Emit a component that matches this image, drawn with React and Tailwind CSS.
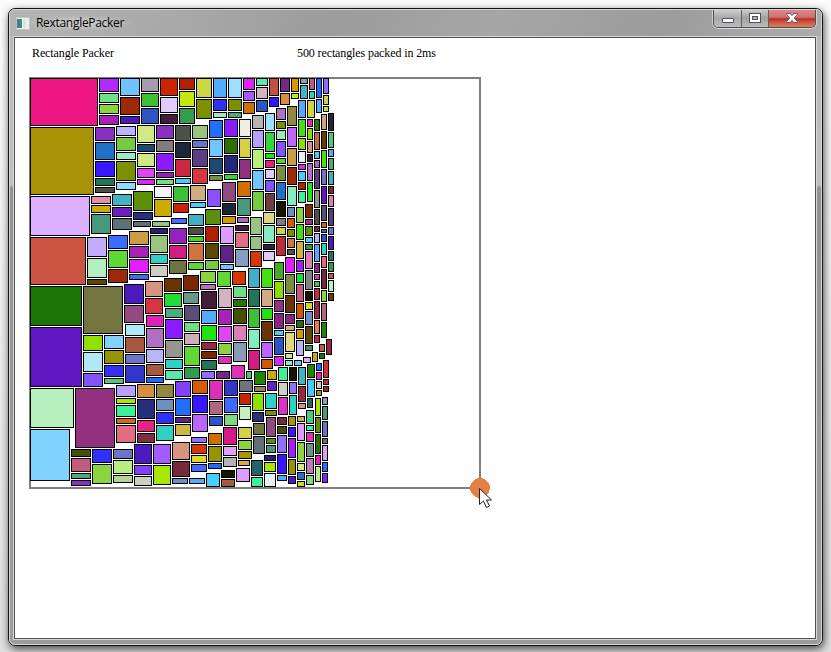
import React from "react";

// Packed boxes grouped in columns: [x, width, "y height colour, ..."]
const COLUMNS = [
  [30, 68, "78 48 ee1680"],
  [30, 64, "127 68 a89206"],
  [30, 60, "196 40 dcb0ff"],
  [30, 56, "237 48 cc5442"],
  [30, 52, "286 40 1c7404,327 60 6016c0"],
  [30, 44, "388 40 b8f0c0"],
  [30, 40, "429 52 80d2ff"],
  [83, 40, "286 48 747440"],
  [75, 40, "388 60 923280"],
  [99, 20, "78 14 b22aff,93 10 6ee087,104 10 8cd440,115 10 a822b8"],
  [120, 20, "78 18 6ec3ff,97 18 9c2a06,116 8 4c18c0"],
  [141, 18, "78 14 a59cb0,93 14 3cc034,108 16 2c56c4"],
  [160, 18, "78 18 cc2400,97 16 e0ccfa,114 10 421c38"],
  [179, 16, "78 12 b41f00,91 16 c6e80c,108 16 309c4c"],
  [196, 16, "78 20 ccd644,99 20 7c9000"],
  [213, 14, "78 20 54aaff,99 12 3030f8,112 6 a0e6c0"],
  [228, 14, "78 20 9ee0ff,99 12 7c9000,112 6 48ac7c"],
  [243, 12, "78 12 e022fa,91 10 a45cff,102 12 d07000"],
  [256, 12, "78 8 5ceca8,87 12 d4b4c0,100 12 2c56c4"],
  [269, 10, "78 18 c45242,97 10 3818f8"],
  [280, 10, "78 14 742a84,93 12 d88e40"],
  [291, 8, "78 14 d89800,93 6 c6e80c"],
  [300, 8, "78 6 889cb8,85 14 40b4c4"],
  [309, 6, "78 12 c45a80,91 8 2cd4c0"],
  [316, 6, "78 20 1c6cff,99 14 54aaff"],
  [323, 6, "78 16 8a70ff,95 10 ccd644,106 6 c6e80c"],
  [95, 20, "127 14 8830c0,142 18 2270c8,161 16 3818ff,178 8 247458,187 6 4c5048"],
  [116, 20, "126 10 bab4f8,137 14 76cc40,152 8 a0e6c0,161 20 7c9000,182 8 8cdcff"],
  [137, 18, "125 18 d0ea84,144 8 204874,153 14 d0ea84,168 10 e044fa,179 6 e022fa"],
  [156, 18, "125 14 8830c0,140 12 847c80,153 18 8a1cff,172 6 9a20b8,179 6 6ee087"],
  [175, 16, "125 16 4c5048,142 16 1c2838,159 18 cc2844,178 6 40d0ff"],
  [192, 16, "125 14 98c480,140 8 6a74c8,149 18 5c3c84,168 16 d83442"],
  [209, 14, "120 18 226eff,139 18 70c6ff,158 16 204874,175 6 749040"],
  [224, 14, "119 18 8a1cff,138 16 2c7004,155 18 242878,174 6 30d83c"],
  [239, 12, "119 18 eeeee4,138 20 d6d044,159 20 923280"],
  [252, 12, "115 14 b4b4b8,130 18 b8a0ff,149 20 b8ee80,170 20 70c6ff,191 20 76cc40"],
  [265, 10, "113 18 9ee0ff,132 20 30d83c,153 6 20e420,160 8 ee1a80,169 10 e0ccfa,180 12 8054ff,193 18 6e3e44"],
  [276, 10, "108 12 b070c4,121 8 7c9000,130 10 a0e6c0,141 16 8054ff,158 6 5ed42c,165 16 7c8c40,182 18 2470c8,201 16 161600,218 8 847c80,227 8 ccd644,236 20 bc2c40"],
  [287, 10, "106 20 948840,127 20 c064ff,148 18 cc9c44,167 18 9c2a06,186 20 84ecc0"],
  [287, 8, "207 10 6e90c0,218 10 d85c00,229 8 7c9000,238 10 d07444,249 6 545454"],
  [298, 8, "100 18 54aaff,119 18 44e010,138 12 8ce000,151 12 e4f0f8,164 6 e022fa,171 10 40d0ff,182 8 b41f00,191 12 3cf09c"],
  [296, 8, "207 16 8cd440,224 16 44e010,241 18 d0b440,260 12 a81cff,273 10 20dc34,284 18 c45a80,303 16 d05800,320 8 2c7004,329 10 d89800,340 16 b8b4f8"],
  [307, 8, "100 18 d0d838"],
  [307, 6, "119 8 dc30b8,128 12 8ce000,141 12 d8947e,154 8 421c38,163 18 b070c4,182 20 20e420"],
  [305, 8, "204 14 7c2a06,219 6 98308a,226 10 5c9008,237 6 44d0ff,244 6 30984c,251 18 dc80b8,270 20 808484,291 10 161600,302 8 d0d838,311 14 6e90c0,326 18 5c4804,345 6 30984c"],
  [314, 6, "119 12 247c04,132 18 c46a48,151 8 44ccff,160 8 a868b8,169 20 5c3c84,190 18 909090,209 16 4c5048,226 6 742a38,233 10 b8b4f8,244 18 54aaff,263 10 8c2484,274 6 e030d0,281 6 20dc34,288 12 cc2844,301 18 9c2840,320 14 e87c44,335 8 cc2440"],
  [321, 6, "114 16 cca880,131 18 6e3c06,150 18 44e010,169 16 6a74c8,186 18 6018c0,205 16 5c4c78,222 6 d06808,229 4 2470c8,234 8 2c56c4,243 12 2cd4c8,256 12 e26c7c,269 20 742a38,290 12 8cd440,303 18 b06880,322 16 1c8800"],
  [328, 6, "113 18 282434,132 16 48cc7c,149 8 54aaff,158 12 48ac7c,171 14 40b0c0,186 8 742a38,195 12 dc80b8,208 18 544074,227 8 6a74c8,236 14 4c18c0,251 10 247458,262 10 309c4c,273 6 cc5540,280 12 b8f0c0,293 8 6a3c06"],
  [319, 6, "344 8 c85644,353 6 1c7400"],
  [326, 6, "339 16 9c2440"],
  [91, 20, "196 8 e090a8,205 8 ccac00,214 20 48987e"],
  [112, 20, "194 12 40b4c4,207 10 6a20c0,218 12 5e7078"],
  [133, 20, "191 20 5c9008,212 8 26307c"],
  [133, 18, "221 6 5e7078"],
  [154, 18, "186 12 f4f4f8,199 18 ccac00"],
  [152, 18, "221 6 98c480"],
  [173, 16, "186 16 3cc034,203 10 cc2400"],
  [171, 16, "218 6 3c70ff"],
  [190, 16, "185 16 d0ac80,202 6 44d0ff"],
  [188, 16, "214 12 40b0c4,227 8 4c5048,236 6 40e010,243 18 d07444,262 8 60d834"],
  [207, 14, "189 18 8c50ff"],
  [205, 16, "209 16 5c9008"],
  [205, 14, "226 16 b41f00,243 16 5c4804,260 10 76cc40"],
  [222, 14, "182 20 924a80,203 12 1c2838,216 8 d89800"],
  [220, 14, "226 18 dc9cff,245 18 5c2484,264 6 6cc6ff"],
  [237, 14, "181 16 d07000,198 18 48987e"],
  [237, 12, "217 6 a868c4"],
  [235, 14, "225 6 421c38,232 16 e26c84,249 18 889cc0"],
  [250, 12, "217 18 98c480,236 14 98c480,251 16 d83800"],
  [263, 12, "212 12 e0d880,225 18 84ecc0,244 6 2c243c,251 10 e0ccfa"],
  [87, 20, "237 20 c4acff,258 20 b4eec0,279 6 604800"],
  [108, 20, "235 14 3c6cff,250 18 60d834,269 14 9c2a06"],
  [129, 20, "231 14 cc9c44,246 12 a822b8,259 14 e022fa,274 6 3c6cf8"],
  [150, 18, "228 6 24207c,235 18 98c480,254 10 30d0c4,265 12 ccd0c4"],
  [169, 18, "228 16 9424c0,245 14 d41c84,260 14 6e7440"],
  [124, 20, "284 20 4c18c0,305 18 924a80"],
  [125, 20, "324 12 b0e8f8,337 16 a85840,354 10 6a74c8,365 18 3038c8"],
  [145, 18, "281 16 d8947e,298 16 d83442"],
  [146, 18, "315 12 dc24b8,328 20 b070c4,349 14 bab4f8,364 12 a85840,377 6 1c6cff"],
  [164, 18, "278 14 6a3406,293 14 20dc34"],
  [165, 18, "308 10 48ac7c,319 20 8a1cff,340 18 989490,359 10 30d0c4,370 10 58e8ac"],
  [183, 16, "275 16 7c2606,292 12 68988a"],
  [184, 16, "305 16 5c4c78,322 10 6ee084,333 12 ccb0b8,346 20 60d834,367 12 309c4c"],
  [200, 16, "271 12 8cd440,284 6 bc70c4"],
  [201, 16, "291 18 421c38,310 14 54aaff,325 16 20e410,342 8 9c2840,351 8 7c2606,360 10 247458"],
  [217, 14, "271 16 60d834"],
  [218, 14, "288 20 d4b4c0,309 16 a822b8,326 16 e044fa,343 12 8cd440,356 8 e030b8"],
  [232, 14, "271 14 d83800"],
  [233, 14, "286 12 6ee087,299 8 2c7004,308 16 445004,325 16 dc80b8,342 20 889cb8"],
  [248, 12, "268 20 40b0c4,289 18 247458,308 20 3cc034,329 20 84ecc0,350 20 d41c84"],
  [261, 12, "268 20 44e010,289 18 d0ac80,308 12 20e410,321 20 6a3406,342 16 bc64ff,359 10 d05800"],
  [274, 10, "262 18 44ac24,281 18 90dc00,300 12 98308a,313 16 8c2484,330 6 44d0ff,337 18 2c56c4,356 10 dc24f8"],
  [285, 10, "257 16 e022fa,274 20 7c8c40,295 18 6a3406,314 10 8c2484,325 6 d0ac80,332 20 e0d880"],
  [285, 8, "353 6 d0ea80,360 6 84ecc8"],
  [294, 8, "360 6 6cc6ff"],
  [303, 8, "357 6 dcacff"],
  [312, 6, "352 10 ccac00"],
  [83, 20, "335 16 90e000,352 20 b0e8f8,373 14 8054ff"],
  [104, 20, "335 14 80d2ff,350 14 989400,365 12 3030f8,378 6 48cc80"],
  [116, 20, "385 12 b8a0ff,398 6 a8e800,405 12 3cf09c,418 6 d07000,425 18 e26c84"],
  [137, 18, "384 14 d88e40,399 20 26307c,420 12 e82480,433 10 80303c"],
  [156, 18, "384 14 948840,399 12 6e90c0,412 12 3030f8,425 16 30d0c4"],
  [175, 16, "381 16 8440ff,398 18 226eff,417 6 5c2484,424 12 d0b840"],
  [192, 16, "380 14 d85c00,395 18 3818ff,414 18 bc64ff"],
  [191, 16, "437 6 9070ff,444 10 d83800,455 8 e0d824,464 8 3c6cff"],
  [189, 16, "478 6 54aaff"],
  [201, 14, "371 8 9070ff"],
  [216, 14, "371 8 742a84"],
  [231, 14, "365 14 dc30b8"],
  [246, 6, "371 8 48cc80"],
  [254, 12, "371 14 208800,386 6 948840"],
  [209, 14, "380 20 dc30b8,401 14 b06880,416 10 2c56c4"],
  [208, 14, "433 12 d07000,446 16 989400,463 6 1c6cff"],
  [206, 14, "473 14 44d0ff"],
  [224, 14, "380 16 3038c8,397 16 3c6cff,414 12 80d880"],
  [223, 14, "427 18 d41c84,446 10 e49cff,457 10 b4b4b8"],
  [221, 14, "470 8 161600,479 8 a85840"],
  [239, 14, "380 12 6e747c"],
  [239, 12, "393 12 cc2400,406 14 c4f0c0"],
  [238, 14, "427 12 d6d044,440 10 8cd440,451 8 ac9400"],
  [238, 12, "460 6 d8ac44"],
  [236, 14, "468 14 dc9cff"],
  [252, 12, "393 18 90e000,412 10 26307c"],
  [253, 12, "423 12 6e7440,436 18 5e7078"],
  [251, 12, "460 16 246464,477 10 3cf09c"],
  [267, 10, "370 10 ccac00,381 10 6a20c0"],
  [265, 12, "393 16 30d0c4,410 6 7c9000"],
  [266, 10, "417 20 924a80,438 6 5c9008,445 8 48987e"],
  [264, 12, "455 6 24207c,462 10 a8e800,473 14 e4f0f8"],
  [278, 10, "367 14 3cf09c,382 14 ccd0c4,397 18 e030c8"],
  [277, 10, "417 8 742a38,426 8 445004,435 18 9070ff,454 20 3818ff,475 6 54aaff"],
  [289, 8, "367 14 161600,382 12 9070ff,395 20 30d0c4"],
  [288, 8, "416 10 ac9400,427 10 3818ff,438 20 a81cff,459 16 989400,476 8 4c18c0"],
  [298, 8, "367 18 40b4c4,386 16 9c2840,403 6 d8947e"],
  [297, 8, "416 6 d0b440,423 18 dc9cff,442 20 8cd440,463 8 d0ea84,472 8 2470c8,481 6 c8e010"],
  [307, 8, "364 14 208800,379 18 44ccff"],
  [307, 6, "398 10 246464"],
  [306, 8, "410 14 48cc7c,425 6 3cf09c,432 10 e030b8,443 14 68988a,458 16 bc7cb8,475 10 80d880"],
  [316, 6, "363 8 226eff,372 8 f020b0,381 8 ccd0c4,390 6 ac9400"],
  [315, 6, "398 18 a8e800,417 16 5c9008,434 20 2c7004,455 10 e020b8,466 16 b8ee80"],
  [323, 6, "360 18 d42c44,379 6 bc2c40,386 6 9c2a06"],
  [322, 6, "397 8 889cb8,406 14 48987e,421 16 6a74c8,438 6 6e7440,445 16 dc9cff,462 10 226eff,473 10 8a1cff"],
  [71, 20, "449 8 445004,458 14 c45a80,473 6 48ac7c,480 6 8830c0"],
  [92, 20, "449 14 3030f8,464 20 8cd440"],
  [113, 20, "449 10 6a74c8,460 14 b8ee80,475 8 b8d490"],
  [134, 18, "444 20 4c18c0,465 10 8440ff,476 10 ccd0c4"],
  [153, 18, "444 20 a45cff,465 20 a8e800"],
  [172, 18, "442 18 d8947e,461 16 742a38"],
  [172, 16, "478 6 6e90c0"],
];

const BOXES = COLUMNS.flatMap(([x, w, list]) =>
  list.split(",").map((item) => {
    const [y, h, color] = item.split(" ");
    return { x, w, y: Number(y), h: Number(h), fill: "#" + color };
  })
);

// The drawing starts at the client area's corner, 15px right and 38px down
function PackedBoxes() {
  return (
    <svg className="block h-[600px] w-[800px]" viewBox="15 38 800 600" shapeRendering="crispEdges">
      <rect x="30" y="78" width="450" height="410" fill="none" stroke="#808080" strokeWidth="2" />
      {BOXES.map((b, i) => (
        <rect key={i} x={b.x + 0.5} y={b.y + 0.5} width={b.w - 1} height={b.h - 1} fill={b.fill} stroke="#000" />
      ))}
      <circle cx="480" cy="488" r="10" fill="#e48045" />
      <path
        d="M479.5 488.5v16l4-3.5 3 6.500 3-1.500-3-6h5z"
        fill="#fff"
        stroke="#20202c"
        shapeRendering="geometricPrecision"
      />
    </svg>
  );
}

function Controls() {
  return (
    <div className="-mt-px flex h-[19px] w-[103px] overflow-hidden rounded-b-[5px] border border-t-0 border-[#505050] shadow-[0_1px_0_#d8d8d8,1px_0_0_#d0d0d0,-1px_0_0_#d0d0d0]">
      <div className="flex w-7 items-end justify-center border-r border-[#606060] bg-linear-to-b from-[#d0d0d0] via-[#a8a8a8] via-50% to-[#bcbcbc] pb-[4px]">
        <div className="h-[5px] w-3 rounded-[1px] border border-[#505060] bg-white" />
      </div>
      <div className="flex w-[27px] items-center justify-center border-r border-[#606060] bg-linear-to-b from-[#d0d0d0] via-[#a0a0a0] via-50% to-[#bcbcbc]">
        <svg width="12" height="10" viewBox="0 0 12 10" shapeRendering="crispEdges">
          <rect x=".5" y=".5" width="11" height="9" rx="1" fill="#fff" stroke="#505060" />
          <rect x="3.500" y="3.500" width="5" height="3" fill="#b0b0b0" stroke="#505060" />
        </svg>
      </div>
      <div className="flex flex-1 items-center justify-center bg-[linear-gradient(to_bottom,#dc8c94_0%,#d4706c_45%,#bc3028_55%,#d05840_75%,#d88068_100%)]">
        <svg width="12" height="10" viewBox="0 0 12 10">
          <path
            d="M.7.5h3.500L6 2.600 7.800.5h3.500v1L8.300 5l3 3.500v1H7.800L6 7.400 4.200 9.500H.7v-1l3-3.500-3-3.500z"
            fill="#fff"
            stroke="#505060"
            strokeWidth=".9"
          />
        </svg>
      </div>
    </div>
  );
}

function TitleBar() {
  return (
    <div className="flex h-[26px] items-start justify-between bg-[linear-gradient(115deg,#b4b4b4_0%,#a8a8a8_22%,#9c9c9c_40%,#a6a6a6_60%,#9c9c9c_80%,#acacac_100%)] pr-[5px] pl-[6px]">
      <div className="flex items-center pt-[5px]">
        <svg className="mt-px" width="14" height="13" viewBox="0 0 14 13" shapeRendering="crispEdges">
          <rect x=".5" y=".5" width="13" height="12" fill="#eef0f0" stroke="#c0c4c4" />
          <rect x="1" y="2" width="5" height="9" fill="#3c8c78" />
          <rect x="1" y="2" width="2" height="9" fill="#4878a0" />
          <rect x="7" y="2" width="3" height="9" fill="#dce4e4" />
        </svg>
        <span className="-ml-1 whitespace-nowrap bg-[radial-gradient(closest-side,rgba(255,255,255,0.45),rgba(255,255,255,0))] px-[10px] font-['Open_Sans',sans-serif] text-[12px] leading-[16px] tracking-[-0.3px] text-black">
          RextanglePacker
        </span>
      </div>
      <Controls />
    </div>
  );
}

export default function App() {
  return (
    <div className="h-[652px] w-[831px] overflow-hidden bg-linear-to-b from-[#fcfcfc] to-[#e0e0e0] px-2 pt-2">
      <div className="h-[638px] w-[815px] rounded-[7px] border border-[#141414] bg-[linear-gradient(to_bottom,#a2a2a2_0px,#b8b8b8_29px,#c0c0c0_176px,#929292_179px,#9c9c9c_100%)] shadow-[1px_3px_8px_0px_rgba(0,0,0,0.7)]">
        <div className="h-[636px] overflow-hidden rounded-[6px] border border-[#d6d6d6]">
          <TitleBar />
          <div className="mr-1 ml-[3px] h-[604px] border border-[#d8d8d8]">
            <div className="h-[602px] border border-[#505050] bg-white">
              <div className="relative h-[600px] overflow-hidden font-['Liberation_Serif',serif] text-[12px] leading-[16px] tracking-[-0.11px] text-black">
                <PackedBoxes />
                <div className="absolute top-[7px] left-[17px] flex whitespace-nowrap">
                  <span className="w-[265px]">Rectangle Packer</span>
                  <span>500 rectangles packed in 2ms</span>
                </div>
              </div>
            </div>
          </div>
        </div>
      </div>
    </div>
  );
}
